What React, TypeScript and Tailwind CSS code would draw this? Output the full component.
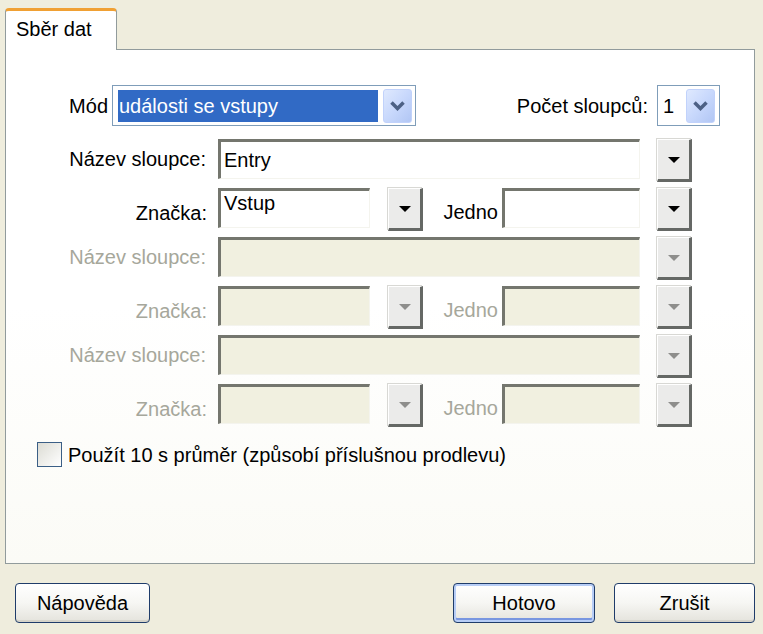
import React from 'react';

const font = { fontFamily: '"Liberation Sans", "DejaVu Sans", sans-serif' };

// malé tlačítko se šipkou (klasický vzhled)
function DropButton({ disabled }: { disabled?: boolean }) {
  return (
    <div className="flex h-[43px] w-[35px] shrink-0 items-center justify-center border-t border-l border-t-white border-l-white border-r-[3px] border-b-[3px] border-r-[#656865] border-b-[#656865] bg-[#ebebea] shadow-[-1px_-1px_0_#d8d8d4]">
      <svg width="14" height="8" viewBox="0 0 14 8">
        <path d="M1 1h12L7 7z" fill={disabled ? '#8e8e8c' : '#000'} />
      </svg>
    </div>
  );
}

// tlačítko kombinovaného pole XP
function ComboArrow() {
  return (
    <div className="flex h-[34px] w-[29px] shrink-0 items-center justify-center rounded-[3px] border border-[#c1d2fb] bg-gradient-to-br from-[#dfe9fe] via-[#c8d8fc] to-[#b1c6f4]">
      <svg width="17" height="11" viewBox="0 0 17 11">
        <path d="M2.5 2.5l6 6 6-6" stroke="#4d6185" strokeWidth="3.5" fill="none" />
      </svg>
    </div>
  );
}

function Field({ width, disabled, children, top }: { width: string; disabled?: boolean; children?: React.ReactNode; top?: boolean }) {
  return (
    <div
      className={`${width} flex h-[40px] shrink-0 border-t-[3px] border-l-[3px] border-t-[#74766e] border-l-[#74766e] border-r border-b border-r-[#f4f4ee] border-b-[#f4f4ee] pl-[3px] text-black ${
        disabled ? 'bg-[#f1f0e0]' : 'bg-white'
      } ${top ? 'items-start pt-[2px]' : 'items-center'}`}
    >
      {children}
    </div>
  );
}

function NameRow({ disabled, value }: { disabled?: boolean; value?: string }) {
  return (
    <div className="flex h-[44px] items-start">
      <div className={`flex h-[40px] w-[200px] shrink-0 items-center justify-end ${disabled ? 'text-[#a6a79b]' : 'text-black'}`}>
        Název sloupce:
      </div>
      <div className="ml-[12px]">
        <Field width="w-[422px]" disabled={disabled}>{value}</Field>
      </div>
      <div className="ml-[17px]">
        <DropButton disabled={disabled} />
      </div>
    </div>
  );
}

function TagRow({ disabled, value }: { disabled?: boolean; value?: string }) {
  const labelColor = disabled ? 'text-[#a6a79b]' : 'text-black';
  return (
    <div className="flex h-[44px] items-start">
      <div className={`flex h-[44px] w-[201px] shrink-0 items-center justify-end pt-[6px] ${labelColor}`}>Značka:</div>
      <div className="ml-[11px]">
        <Field width="w-[152px]" disabled={disabled} top>{value}</Field>
      </div>
      <div className="ml-[18px]">
        <DropButton disabled={disabled} />
      </div>
      <div className={`flex h-[44px] w-[79px] shrink-0 items-center justify-end pr-[4px] pt-[4px] ${labelColor}`}>Jedno</div>
      <Field width="w-[138px]" disabled={disabled} />
      <div className="ml-[17px]">
        <DropButton disabled={disabled} />
      </div>
    </div>
  );
}

function XPButton({ label, isDefault }: { label: string; isDefault?: boolean }) {
  return (
    <button
      className={`h-[40px] w-full rounded-[4px] border border-[#1f3c6a] bg-gradient-to-b from-white via-[#f6f6f3] to-[#e4e3dc] text-black ${
        isDefault ? 'shadow-[inset_0_0_0_2px_#b7cdf6,inset_0_-2px_0_2px_#7896e0]' : 'shadow-[inset_0_-2px_0_#d6d4ca]'
      }`}
    >
      {label}
    </button>
  );
}

export default function App() {
  return (
    <div className="flex h-[634px] w-[763px] flex-col overflow-hidden bg-[#efeddd] pl-[5px] pr-[8px] pt-2 text-[20px] leading-none" style={font}>
      {/* záložka */}
      <div className="flex">
        <div className="relative z-10 -mb-px h-[42px] w-[112px] rounded-t-[4px] border-x border-t-[3px] border-x-[#919b9c] border-t-[#f0a033] bg-white pl-[10px] pt-[8px]">
          Sběr dat
        </div>
      </div>

      {/* panel */}
      <div className="flex h-[515px] flex-col border border-[#919b9c] bg-gradient-to-b from-white via-white to-[#fbfbf6]">
        <div className="mt-[35px] flex items-center pr-[34px]">
          <div className="w-[102px] shrink-0 text-right">Mód</div>
          <div className="ml-[4px] flex h-[41px] w-[304px] items-center border border-[#7f9db9] bg-white pl-[5px] pr-[3px]">
            <div className="flex h-[32px] flex-1 items-center bg-[#316ac5] pl-[1px] text-white">události se vstupy</div>
            <div className="ml-[5px]">
              <ComboArrow />
            </div>
          </div>
          <div className="flex-1" />
          <div>Počet sloupců:</div>
          <div className="ml-[9px] flex h-[41px] w-[63px] items-center border border-[#7f9db9] bg-white pl-[5px] pr-[4px]">
            <div className="flex-1">1</div>
            <ComboArrow />
          </div>
        </div>

        <div className="mt-[13px] flex flex-col gap-[5px]">
          <NameRow value="Entry" />
          <TagRow value="Vstup" />
          <NameRow disabled />
          <TagRow disabled />
          <NameRow disabled />
          <TagRow disabled />
        </div>

        <div className="ml-[31px] mt-[14px] flex items-center">
          <div className="h-[25px] w-[25px] border border-[#3b5f86] bg-gradient-to-br from-[#dcdcd4] to-white" />
          <span className="ml-[6px]">Použít 10 s průměr (způsobí příslušnou prodlevu)</span>
        </div>
      </div>

      {/* tlačítka */}
      <div className="mt-[19px] flex">
        <div className="ml-[10px] w-[135px]">
          <XPButton label="Nápověda" />
        </div>
        <div className="flex-1" />
        <div className="flex w-[302px] gap-[19px]">
          <div className="w-[142px]">
            <XPButton label="Hotovo" isDefault />
          </div>
          <div className="w-[141px]">
            <XPButton label="Zrušit" />
          </div>
        </div>
      </div>
    </div>
  );
}
